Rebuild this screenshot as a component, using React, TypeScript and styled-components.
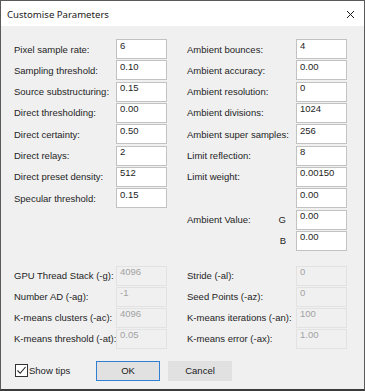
import React from "react";
import styled, { createGlobalStyle } from "styled-components";

const GlobalStyle = createGlobalStyle`
  html, body {
    margin: 0;
    padding: 0;
    background: #ffffff;
  }
  * {
    box-sizing: border-box;
  }
`;

const UI_FONT = `"Liberation Sans", Arial, sans-serif`;

const Window = styled.div`
  width: 365px;
  height: 391px;
  display: flex;
  flex-direction: column;
  border: 1px solid #5a5a5a;
  border-bottom: 2px solid #3a3a3a;
  background: #f0f0f0;
  font-family: ${UI_FONT};
  font-size: 9.5px;
  color: #1e1e1e;
`;

const TitleBar = styled.div`
  height: 25px;
  flex: none;
  display: flex;
  align-items: center;
  justify-content: space-between;
  padding: 0 9px 0 6px;
  background: #ffffff;
`;

const Title = styled.span`
  font-family: "Noto Sans", sans-serif;
  font-size: 9.6px;
  color: #1a1a1a;
  padding-top: 2px;
`;

const CloseIcon = styled.svg`
  width: 9px;
  height: 9px;
  margin-top: 2px;
`;

const Body = styled.div`
  flex: 1;
  display: flex;
  flex-direction: column;
  padding: 13px 17px 0 13px;
`;

const Columns = styled.div`
  display: flex;
  align-items: flex-start;
  gap: 20px;
`;

const Column = styled.div<{ $width: number; $gap: number }>`
  width: ${({ $width }) => $width}px;
  display: flex;
  flex-direction: column;
  gap: ${({ $gap }) => $gap}px;
`;

const Row = styled.div<{ $labelWidth: number }>`
  display: grid;
  grid-template-columns: ${({ $labelWidth }) => $labelWidth}px 51px;
  align-items: center;
  height: 20px;
`;

const Label = styled.label`
  white-space: nowrap;
  display: flex;
  align-items: center;
  justify-content: space-between;
`;

const SubLabel = styled.span`
  padding-right: 10px;
`;

const Field = styled.input`
  width: 51px;
  height: 20px;
  margin: 0;
  padding: 0 3px 8px;
  border: 1px solid #c2c2c2;
  border-radius: 0;
  background: #ffffff;
  font-family: ${UI_FONT};
  font-size: 9.5px;
  color: #1e1e1e;
  outline: none;

  &:disabled {
    background: #f0f0f0;
    border-color: #e2e2e2;
    color: #a2a2a2;
  }
`;

const Advanced = styled(Columns)`
  margin-top: 15px;
`;

const Footer = styled.div`
  display: flex;
  align-items: center;
  margin-top: 12px;
  gap: 8px;
`;

const TipsToggle = styled.label`
  width: 74px;
  display: flex;
  align-items: center;
  gap: 1px;
  padding-left: 1px;
`;

const CheckBox = styled.span`
  width: 13px;
  height: 13px;
  border: 1px solid #333333;
  background: #ffffff;
  display: flex;
  align-items: center;
  justify-content: center;
`;

const Button = styled.button<{ $primary?: boolean }>`
  width: 64px;
  height: 20px;
  margin: 0;
  padding: 0;
  font-family: ${UI_FONT};
  font-size: 9.5px;
  color: #1a1a1a;
  background: #e1e1e1;
  border: 1px solid ${({ $primary }) => ($primary ? "#2f7fd2" : "#e1e1e1")};
  border-radius: 0;
`;

const mainLeft: [string, string][] = [
  ["Pixel sample rate:", "6"],
  ["Sampling threshold:", "0.10"],
  ["Source substructuring:", "0.15"],
  ["Direct thresholding:", "0.00"],
  ["Direct certainty:", "0.50"],
  ["Direct relays:", "2"],
  ["Direct preset density:", "512"],
  ["Specular threshold:", "0.15"],
];

const mainRight: [string, string, string?][] = [
  ["Ambient bounces:", "4"],
  ["Ambient accuracy:", "0.00"],
  ["Ambient resolution:", "0"],
  ["Ambient divisions:", "1024"],
  ["Ambient super samples:", "256"],
  ["Limit reflection:", "8"],
  ["Limit weight:", "0.00150"],
  ["", "0.00"],
  ["Ambient Value:", "0.00", "G"],
  ["", "0.00", "B"],
];

const advLeft: [string, string][] = [
  ["GPU Thread Stack (-g):", "4096"],
  ["Number AD (-ag):", "-1"],
  ["K-means clusters (-ac):", "4096"],
  ["K-means threshold (-at):", "0.05"],
];

const advRight: [string, string][] = [
  ["Stride (-al):", "0"],
  ["Seed Points (-az):", "0"],
  ["K-means iterations (-an):", "100"],
  ["K-means error (-ax):", "1.00"],
];

export default function App() {
  return (
    <>
      <GlobalStyle />
      <Window>
        <TitleBar>
          <Title>Customise Parameters</Title>
          <CloseIcon viewBox="0 0 9 9">
            <path d="M1 1 L8 8 M8 1 L1 8" stroke="#1a1a1a" strokeWidth="1" fill="none" />
          </CloseIcon>
        </TitleBar>
        <Body>
          <Columns>
            <Column $width={153} $gap={1.33}>
              {mainLeft.map(([label, value]) => (
                <Row key={label} $labelWidth={102}>
                  <Label>{label}</Label>
                  <Field defaultValue={value} />
                </Row>
              ))}
            </Column>
            <Column $width={160} $gap={1.33}>
              {mainRight.map(([label, value, sub], i) => (
                <Row key={i} $labelWidth={109}>
                  <Label>
                    <span>{label}</span>
                    {sub && <SubLabel>{sub}</SubLabel>}
                  </Label>
                  <Field defaultValue={value} />
                </Row>
              ))}
            </Column>
          </Columns>

          <Advanced>
            <Column $width={153} $gap={1}>
              {advLeft.map(([label, value]) => (
                <Row key={label} $labelWidth={102}>
                  <Label>{label}</Label>
                  <Field defaultValue={value} disabled />
                </Row>
              ))}
            </Column>
            <Column $width={160} $gap={1}>
              {advRight.map(([label, value]) => (
                <Row key={label} $labelWidth={109}>
                  <Label>{label}</Label>
                  <Field defaultValue={value} disabled />
                </Row>
              ))}
            </Column>
          </Advanced>

          <Footer>
            <TipsToggle>
              <CheckBox>
                <svg width="11" height="11" viewBox="0 0 11 11">
                  <path d="M1.5 5.5 L4.2 8.3 L9.5 2" stroke="#222" strokeWidth="1.1" fill="none" />
                </svg>
              </CheckBox>
              <span>Show tips</span>
            </TipsToggle>
            <Button $primary>OK</Button>
            <Button>Cancel</Button>
          </Footer>
        </Body>
      </Window>
    </>
  );
}
